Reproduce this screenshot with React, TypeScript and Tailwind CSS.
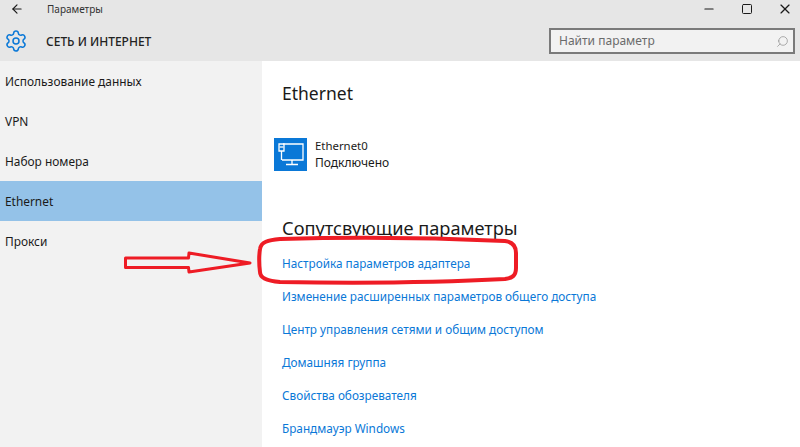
import React from "react";
import { ArrowLeft, Minus, Search, Settings, Square, X } from "lucide-react";

const navItems = ["Использование данных", "VPN", "Набор номера", "Ethernet", "Прокси"];

const links = [
  "Настройка параметров адаптера",
  "Изменение расширенных параметров общего доступа",
  "Центр управления сетями и общим доступом",
  "Домашняя группа",
  "Свойства обозревателя",
  "Брандмауэр Windows",
];

const App: React.FC = () => {
  return (
    <div className="relative flex h-[447px] w-[800px] flex-col overflow-hidden bg-white font-['Noto_Sans',sans-serif] text-[11.9px] text-[#1a1a1a]">
      {/* Header */}
      <div className="flex h-[61px] flex-none flex-col bg-[#e6e6e6]">
        <div className="flex h-[18px] items-center">
          <ArrowLeft className="ml-[10px] size-[14px]" strokeWidth={2} />
          <span className="ml-[23px] text-[10px] text-[#333]">Параметры</span>
          <div className="ml-auto flex items-center pr-[7px]">
            <Minus className="size-[14px]" strokeWidth={2} />
            <Square className="ml-[25px] size-[12px]" strokeWidth={2} />
            <X className="ml-[24px] size-[16px]" strokeWidth={1.75} />
          </div>
        </div>
        <div className="flex flex-1 items-center pt-[3px]">
          <Settings className="ml-[4px] size-[24px] text-[#0a78d7]" strokeWidth={1.5} />
          <span className="mt-[1px] ml-[18px] text-[12px] font-medium text-[#222]">СЕТЬ И ИНТЕРНЕТ</span>
          <div className="mr-[5px] ml-auto flex h-[26px] w-[246px] items-center justify-between border-2 border-[#7a7a7a] bg-[#f2f2f2] pr-[4px] pl-[8px] text-[#6b6b6b]">
            <span className="text-[12px]">Найти параметр</span>
            <Search className="size-[13px] -scale-x-100 text-[#888]" strokeWidth={1.25} />
          </div>
        </div>
      </div>

      <div className="flex flex-1">
        {/* Sidebar */}
        <div className="w-[262px] flex-none bg-[#f2f2f2]">
          {navItems.map((item) => (
            <div
              key={item}
              className={
                item === "Ethernet"
                  ? "flex h-[40px] items-center bg-[#94c2e8] pt-[2px] pl-[5px]"
                  : "flex h-[40px] items-center pt-[2px] pl-[5px]"
              }
            >
              {item}
            </div>
          ))}
        </div>

        {/* Content */}
        <div className="flex-1 pl-[20px]">
          <h1 className="mt-[19px] text-[17.5px] leading-[26px] text-[#1a1a1a]">Ethernet</h1>

          <div className="mt-[31px] -ml-[8px] flex items-center">
            <div className="size-[33px] bg-[#0a78d7]">
              <svg viewBox="0 0 33 33" className="size-[33px]" fill="none" stroke="white" strokeWidth="1.3">
                <path d="M9 6h20v16H8" />
                <path d="M5 6h5v7H5z" />
                <path d="M5.5 9h4" />
                <path d="M7.5 13v9" />
                <path d="M18 22v4.5M12 26.5h12" />
              </svg>
            </div>
            <div className="ml-[8px] flex flex-col text-[12px] leading-[17px]">
              <span className="text-[11.4px]">Ethernet0</span>
              <span>Подключено</span>
            </div>
          </div>

          <h2 className="mt-[44px] text-[18.2px] leading-[26px] text-[#1a1a1a]">Сопутсвующие параметры</h2>

          <div className="mt-[6px] flex flex-col">
            {links.map((link) => (
              <a key={link} className="flex h-[33px] items-center text-[11.75px] text-[#0a78d7]">
                {link}
              </a>
            ))}
          </div>
        </div>
      </div>

      {/* Red annotation drawn over the page */}
      <svg className="absolute top-0 left-0 h-[447px] w-[800px]" viewBox="0 0 800 447" fill="none" stroke="#ee1c25">
        <path d="M125.5 258H188.5L189 253L250 263L189 272L188.5 267.5H125.5Z" strokeWidth="3" strokeLinejoin="round" />
        <path
          d="M280 239C350 237 440 238 505 241C513 242 516 246 516 253V268C516 276 512 278 505 279C430 283 340 283 280 282C267 281 260 278 260 272C259 264 259 255 260 249C261 242 268 240 280 239Z"
          strokeWidth="4"
        />
      </svg>
    </div>
  );
};

export default App;
